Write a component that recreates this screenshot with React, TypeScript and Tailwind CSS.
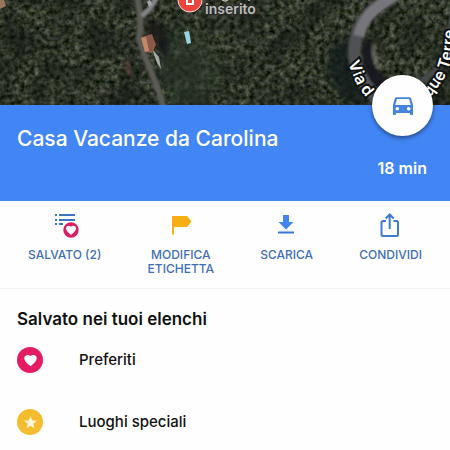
import React from "react";

interface SavedList {
  name: string;
  color: string;
  icon: React.ReactNode;
}

const HEART =
  "M12 21.35l-1.45-1.32C5.4 15.36 2 12.28 2 8.5 2 5.42 4.42 3 7.5 3c1.74 0 3.41.81 4.5 2.09C13.09 3.81 14.76 3 16.5 3 19.58 3 22 5.42 22 8.5c0 3.78-3.4 6.86-8.55 11.54L12 21.35z";

const HeartIcon = () => (
  <svg viewBox="0 0 24 24" className="h-[15px] w-[15px]" fill="#fff">
    <path d={HEART} />
  </svg>
);

const StarIcon = () => (
  <svg viewBox="0 0 24 24" className="h-[15px] w-[15px]" fill="#fff6d8">
    <path d="M12 17.27L18.18 21l-1.64-7.03L22 9.24l-7.19-.61L12 2 9.19 8.63 2 9.24l5.46 4.73L5.82 21z" />
  </svg>
);

const SavedIcon = () => (
  <svg viewBox="0 0 28 28" className="h-7 w-7">
    <g fill="#3b76c4">
      <path d="M4 2h2v2H4zM8 2h16v2H8zM4 7h2v2H4zM8 7h16v2H8zM4 11h2v2H4zM8 11h4v2H8z" />
    </g>
    <circle cx="20" cy="18" r="7.7" fill="#d81f63" />
    <path d={HEART} fill="#fff" transform="translate(14 12.200) scale(.5)" />
  </svg>
);

const LabelIcon = () => (
  <svg viewBox="0 0 28 28" className="h-7 w-7">
    <path d="M5 4H20L24.500 9.500L20 15H7V22.500H5z" fill="#f6ae13" />
  </svg>
);

const DownloadIcon = () => (
  <svg viewBox="0 0 28 28" className="h-7 w-7" fill="#4285f4">
    <path d="M10 3h6v7h4.500L13 17.500 5.500 10H10z" />
    <path d="M5 19.500h16v2H5z" fill="#3b76d4" />
  </svg>
);

const ShareIcon = () => (
  <svg viewBox="0 0 28 28" className="h-7 w-7" fill="none" stroke="#3f7bd4" strokeWidth="2">
    <path d="M9 9H6Q4.500 9 4.500 10.500V22.500Q4.500 24 6 24H19.500Q21 24 21 22.500V10.500Q21 9 19.500 9H16.500" />
    <path d="M12.700 17V2.500M8.700 6.500L12.700 2.500L16.700 6.500" />
  </svg>
);

const CarIcon = () => (
  <svg viewBox="0 0 24 24" className="h-6 w-6" fill="#4583e0">
    <path
      fillRule="evenodd"
      d="M5.300 3.200h13.400c.7 0 1.200.4 1.400 1L22 11v9.300c0 .4-.3.700-.7.700h-1.600c-.4 0-.7-.3-.7-.7V19H5v1.300c0 .4-.3.700-.7.700H2.700c-.4 0-.7-.3-.7-.7V11l1.900-6.800c.2-.6.700-1 1.400-1zM5.900 5L4.300 11h15.400L18.100 5zM6.300 13a1.800 1.800 0 100 3.600 1.800 1.800 0 000-3.600zM17.700 13a1.800 1.800 0 100 3.600 1.800 1.800 0 000-3.600z"
    />
  </svg>
);

const actions = [
  { lines: ["SALVATO (2)"], icon: <SavedIcon /> },
  { lines: ["MODIFICA", "ETICHETTA"], icon: <LabelIcon /> },
  { lines: ["SCARICA"], icon: <DownloadIcon /> },
  { lines: ["CONDIVIDI"], icon: <ShareIcon /> },
];

const lists: SavedList[] = [
  { name: "Preferiti", color: "bg-[#e31c63]", icon: <HeartIcon /> },
  { name: "Luoghi speciali", color: "bg-[#f3bd2f]", icon: <StarIcon /> },
];

const SatelliteMap = () => (
  <svg
    viewBox="0 0 450 105"
    preserveAspectRatio="xMidYMid slice"
    className="block h-auto w-full bg-[#30352c]"
    fontFamily="Inter, sans-serif"
  >
    <defs>
      {/* tree canopy: fine grain over larger dark patches */}
      <filter id="canopy" x="0" y="0" width="100%" height="100%" colorInterpolationFilters="sRGB">
        <feTurbulence type="fractalNoise" baseFrequency="0.2" numOctaves="4" seed="8" />
        <feColorMatrix values="0.54 0.08 0 0 -0.115  0.5 0.13 0 0 -0.095  0.5 0.02 0.06 0 -0.125  0 0 0 0 1" />
      </filter>
      <filter id="patches" x="0" y="0" width="100%" height="100%" colorInterpolationFilters="sRGB">
        <feTurbulence type="fractalNoise" baseFrequency="0.035" numOctaves="2" seed="3" />
        <feColorMatrix values="0 0 0 0 0.07  0 0 0 0 0.09  0 0 0 0 0.07  1.6 0 0 0 -0.65" />
      </filter>
      <filter id="soft" x="-10%" y="-10%" width="120%" height="120%">
        <feGaussianBlur stdDeviation="1" />
      </filter>
      <filter id="shade" x="-10%" y="-10%" width="120%" height="120%">
        <feGaussianBlur stdDeviation="3" />
      </filter>
      <path id="street-left" d="M348 63L355 80Q360 92 374 105" />
      <path id="street-right" d="M430 98L443 80Q450 69 452 54Q455 38 455 10" />
    </defs>
    <rect width="450" height="105" filter="url(#canopy)" />
    <rect width="450" height="105" filter="url(#patches)" />

    <g filter="url(#shade)">
      <path d="M166 34L200 30L222 60L208 105H170L158 66Z" fill="#28382a" opacity=".5" />
      <path d="M146 22L160 19L170 34L168 66L160 53L145 34Z" fill="#15171a" opacity=".85" />
      <path d="M332 46L350 42L352 70L374 105H346L325 72Z" fill="#15181b" opacity=".75" />
    </g>
    <g filter="url(#soft)">
      <path d="M364 42L371 41L374 66L392 84L379 96L363 73Z" fill="#15181c" opacity=".9" />
      <path d="M137 -4C140 14 142 23 139 37C143 60 158 80 164 110" fill="none" stroke="#5b5c56" strokeWidth="6" />
      <path d="M157 -3Q151 9 142 16" fill="none" stroke="#85868a" strokeWidth="5" />
      <path d="M398 -6C370 9 357 22 355 45C352 65 362 88 388 108" fill="none" stroke="#505154" strokeWidth="13" />
      <path d="M396 -6C374 8 363 17 359 36" fill="none" stroke="#77767a" strokeWidth="11" />
      <path d="M453 5Q452 50 437 69L402 95" fill="none" stroke="#45484a" strokeWidth="6" />
      <path d="M375 44Q371 57 380 68" fill="none" stroke="#8a8b7e" strokeWidth="5" opacity=".5" />
      <path d="M127 60L130 76" stroke="#744138" strokeWidth="4" opacity=".5" />
    </g>
    <path d="M141 37L152 34L156 45L152 53L145 52Z" fill="#8a5a48" />
    <path d="M141 38L146 37L149 51L145 52Z" fill="#c3886a" />
    <path d="M153 50L159 57L161 69L157 63L154 55Z" fill="#a4a8a6" />
    <path d="M184 32L189 31L191 43L187 44Z" fill="#9bd3e0" />
    <path d="M0 0H4L6 6L0 9Z" fill="#9a745d" />
    <path d="M147 2L150 0L152 4L149 7Z" fill="#a2a5aa" />

    <circle cx="190" cy="0" r="12" fill="#e8453c" stroke="#f4dfdc" strokeWidth="1" />
    <path d="M187 -4H193V4H187Z" fill="none" stroke="#fff" strokeWidth="2" />
    <path d="M222 0Q225 2 228 0M249 0V1" fill="none" stroke="#b9b9b6" strokeWidth="1.500" />
    <text x="205" y="14" fontSize="14" fontWeight="600" fill="#bdbdba" stroke="#292b29" strokeWidth="2" paintOrder="stroke">
      inserito
    </text>
    <g fontSize="16" fontWeight="600" fill="#fff" stroke="#101314" strokeWidth="4" paintOrder="stroke">
      <text>
        <textPath href="#street-left">Via d</textPath>
      </text>
      <text>
        <textPath href="#street-right">que Terre</textPath>
      </text>
    </g>
  </svg>
);

const App = () => {
  return (
    <div className="min-h-screen bg-[#fefefe] font-['Inter',sans-serif] text-[#111]">
      <SatelliteMap />

      {/* Place header */}
      <header className="relative bg-[#4285f4] px-[17px] pt-5 pb-[22px] text-white">
        <h1 className="text-[21px] leading-7 font-medium">Casa Vacanze da Carolina</h1>
        <p className="mt-1 pr-1.5 text-right text-base leading-[22px] font-semibold">18 min</p>
        <button
          type="button"
          aria-label="Indicazioni in auto"
          className="absolute -top-[30px] right-[17px] flex h-[61px] w-[61px] items-center justify-center rounded-full bg-[#fefefe] shadow-[0_2px_4px_rgba(0,0,0,0.45)]"
        >
          <CarIcon />
        </button>
      </header>

      {/* Actions */}
      <nav className="flex items-start justify-between border-b border-[#f5f5f5] px-7 pt-[11px] pb-3">
        {actions.map((action) => (
          <button
            key={action.lines[0]}
            type="button"
            className="flex flex-col items-center gap-2 text-xs leading-[14px] font-medium text-[#3f6fb8]"
          >
            {action.icon}
            <span>
              {action.lines.map((line) => (
                <span key={line} className="block">
                  {line}
                </span>
              ))}
            </span>
          </button>
        ))}
      </nav>

      {/* Saved lists */}
      <section className="px-[17px] pt-[18px]">
        <h2 className="text-[17px] leading-6 font-semibold">Salvato nei tuoi elenchi</h2>
        <ul className="mt-4 flex flex-col gap-9">
          {lists.map((list) => (
            <li key={list.name} className="flex items-center gap-9">
              <span className={`flex h-[26px] w-[26px] items-center justify-center rounded-full ${list.color}`}>
                {list.icon}
              </span>
              <span className="text-[15px] leading-5 font-medium">{list.name}</span>
            </li>
          ))}
        </ul>
      </section>
    </div>
  );
};

export default App;
